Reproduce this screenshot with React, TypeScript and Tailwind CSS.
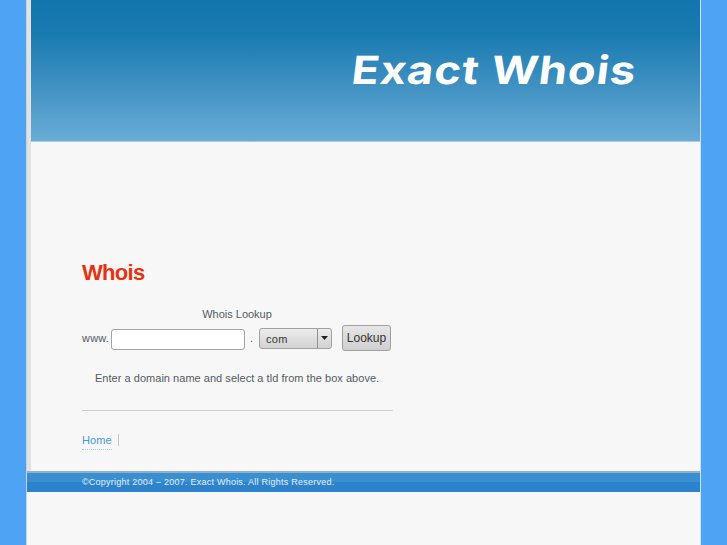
export default function App() {
  return (
    <div className="flex h-[545px] w-[727px] overflow-hidden bg-[#4fa3f5] font-['Liberation_Sans',Arial,sans-serif] text-[#555b63]">
      <div className="w-[26px] shrink-0 bg-[#4fa3f5]" />
      <div className="flex w-[675px] shrink-0 flex-col border-l border-r border-l-[#c9d3dc] border-r-[#cfe3f7] bg-[#f7f7f7]">
        <div className="flex flex-1 flex-col border-l-[4px] border-l-[#e2e2e2]">
          <header className="flex h-[142px] shrink-0 items-start border-b border-b-[#a9cbe4] bg-[linear-gradient(180deg,#1275ac_0%,#1a7bb1_25%,#3a8dbf_55%,#5aa2cf_85%,#69abd6_100%)] pl-[321px]">
            <span className="mt-[47px] inline-block origin-left skew-x-[-6deg] scale-x-[1.16] whitespace-nowrap font-['Inter',sans-serif] text-[39px] leading-[46px] font-bold tracking-[0.8px] text-white">
              Exact Whois
            </span>
          </header>
          <main className="flex-1 pl-[51px]">
            <h1 className="mt-[118px] text-[22px] leading-[26px] font-bold tracking-[-0.7px] text-[#e8310f]">Whois</h1>
            <div className="w-[311px]">
              <p className="mt-[20px] pr-[1px] text-center text-[11px] leading-[16px]">Whois Lookup</p>
              <form className="mt-[3px] flex h-[26px] items-center text-[11px]">
                <span className="w-[29px] tracking-[0.2px]">www.</span>
                <input className="mt-[2px] h-[21px] w-[134px] rounded-[3px] border border-[#a3a3a3] bg-white" />
                <span className="ml-[5px] w-[9px]">.</span>
                <div className="flex h-[21px] w-[73px] overflow-hidden rounded-[3px] border border-[#a0a0a0] bg-[linear-gradient(180deg,#ececec,#d2d2d2)]">
                  <span className="flex-1 pl-[6px] leading-[20px] tracking-[0.3px] text-[#333]">com</span>
                  <span className="flex w-[14px] items-center justify-center border-l border-l-[#8f8f8f]">
                    <svg width="7" height="4" viewBox="0 0 7 4"><path d="M0 0h7L3.5 4z" fill="#222" /></svg>
                  </span>
                </div>
                <button type="button" className="ml-[10px] h-[26px] w-[49px] rounded-[3px] border border-[#a0a0a0] bg-[linear-gradient(180deg,#e6e6e6,#d0d0d0)] text-[12px] text-[#333]">
                  Lookup
                </button>
              </form>
              <p className="mt-[19px] whitespace-nowrap pl-[13px] text-[11px] leading-[16px] tracking-[0.03px]">
                Enter a domain name and select a tld from the box above.
              </p>
              <div className="mt-[24px] h-px bg-[#cfcfcf]" />
              <nav className="mt-[22px] flex items-center text-[11px] leading-[14px] tracking-[0.1px]">
                <a className="border-b border-dotted border-b-[#a9d2f7] pb-[2px] text-[#3f97ee]">Home</a>
                <span className="ml-[6px] mb-[3px] h-[12px] w-px bg-[#c9c9c9]" />
              </nav>
            </div>
          </main>
        </div>
        <footer className="mb-[53px] flex h-[21px] shrink-0 items-center border-t-2 border-t-[#8fb0d2] bg-[linear-gradient(180deg,#3a8fd0_0%,#3a8fd0_45%,#2c82cc_50%,#2c82cc_100%)] pl-[55px] text-[9px] tracking-[0.24px] text-[#e6f0fa]">
          ©Copyright 2004 – 2007. Exact Whois. All Rights Reserved.
        </footer>
      </div>
      <div className="flex-1 bg-[#4fa3f5]" />
    </div>
  );
}
